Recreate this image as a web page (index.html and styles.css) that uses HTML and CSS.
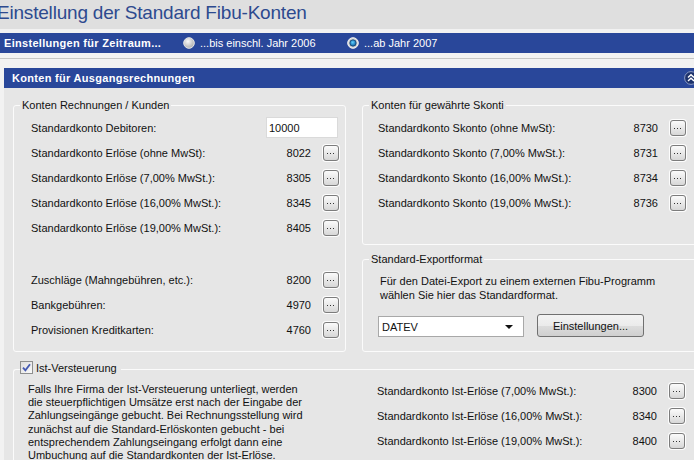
FILE: index.html
```html
<!DOCTYPE html>
<html lang="de">
<head>
  <meta charset="UTF-8">
  <meta name="viewport" content="width=device-width, initial-scale=1.0">
  <title>Einstellung der Standard Fibu-Konten</title>
  <link rel="stylesheet" href="styles.css">
</head>
<body>
  <h1 class="page-title">Einstellung der Standard Fibu-Konten</h1>

  <div class="period-bar">
    <span class="period-label">Einstellungen für Zeitraum...</span>
    <label class="period-option">
      <svg class="radio" width="12" height="12" viewBox="0 0 12 12">
        <defs>
          <radialGradient id="radio-off" cx="40%" cy="35%" r="70%">
            <stop offset="0" stop-color="#fbfbfb"/>
            <stop offset="1" stop-color="#a9a9a9"/>
          </radialGradient>
        </defs>
        <circle cx="6" cy="6" r="5.3" fill="url(#radio-off)" stroke="#e8e8e8" stroke-width="1"/>
      </svg>
      ...bis einschl. Jahr 2006
    </label>
    <label class="period-option">
      <svg class="radio" width="12" height="12" viewBox="0 0 12 12">
        <defs>
          <radialGradient id="radio-on" cx="45%" cy="40%" r="60%">
            <stop offset="0" stop-color="#5fd0ff"/>
            <stop offset="1" stop-color="#0b5fa0"/>
          </radialGradient>
        </defs>
        <circle cx="6" cy="6" r="5.3" fill="#d6d6d6" stroke="#f4f4f4" stroke-width="1"/>
        <circle cx="6" cy="6" r="3.2" fill="url(#radio-on)" stroke="#14406e" stroke-width="0.8"/>
      </svg>
      ...ab Jahr 2007
    </label>
  </div>

  <div class="divider"></div>

  <div class="section">
    <div class="section-head">
      <span>Konten für Ausgangsrechnungen</span>
      <svg class="collapse" width="14" height="14" viewBox="0 0 14 14">
        <circle cx="7" cy="7" r="6.4" fill="#1d326c" stroke="#8d9cc4" stroke-width="1"/>
        <polyline points="4,6.5 7,3.8 10,6.5" fill="none" stroke="#fff" stroke-width="1.4"/>
        <polyline points="4,10 7,7.3 10,10" fill="none" stroke="#fff" stroke-width="1.4"/>
      </svg>
    </div>

    <div class="section-body">
      <!-- Erlöskonten links -->
      <fieldset class="group group-invoices">
        <legend>Konten Rechnungen / Kunden</legend>
        <div class="rows">
          <div class="row">
            <span class="label">Standardkonto Debitoren:</span>
            <input class="account-input" type="text" value="10000">
          </div>
          <div class="row">
            <span class="label">Standardkonto Erlöse (ohne MwSt):</span>
            <span class="value">8022</span><button class="pick"></button>
          </div>
          <div class="row">
            <span class="label">Standardkonto Erlöse (7,00% MwSt.):</span>
            <span class="value">8305</span><button class="pick"></button>
          </div>
          <div class="row">
            <span class="label">Standardkonto Erlöse (16,00% MwSt.):</span>
            <span class="value">8345</span><button class="pick"></button>
          </div>
          <div class="row">
            <span class="label">Standardkonto Erlöse (19,00% MwSt.):</span>
            <span class="value">8405</span><button class="pick"></button>
          </div>
          <div class="row row-spaced">
            <span class="label">Zuschläge (Mahngebühren, etc.):</span>
            <span class="value">8200</span><button class="pick"></button>
          </div>
          <div class="row">
            <span class="label">Bankgebühren:</span>
            <span class="value">4970</span><button class="pick"></button>
          </div>
          <div class="row">
            <span class="label">Provisionen Kreditkarten:</span>
            <span class="value">4760</span><button class="pick"></button>
          </div>
        </div>
      </fieldset>

      <div class="side">
        <fieldset class="group group-discount">
          <legend>Konten für gewährte Skonti</legend>
          <div class="rows">
            <div class="row">
              <span class="label">Standardkonto Skonto (ohne MwSt):</span>
              <span class="value">8730</span><button class="pick"></button>
            </div>
            <div class="row">
              <span class="label">Standardkonto Skonto (7,00% MwSt.):</span>
              <span class="value">8731</span><button class="pick"></button>
            </div>
            <div class="row">
              <span class="label">Standardkonto Skonto (16,00% MwSt.):</span>
              <span class="value">8734</span><button class="pick"></button>
            </div>
            <div class="row">
              <span class="label">Standardkonto Skonto (19,00% MwSt.):</span>
              <span class="value">8736</span><button class="pick"></button>
            </div>
          </div>
        </fieldset>

        <fieldset class="group group-export">
          <legend>Standard-Exportformat</legend>
          <p class="export-text">Für den Datei-Export zu einem externen Fibu-Programm<br>wählen Sie hier das Standardformat.</p>
          <div class="export-controls">
            <div class="select"><span>DATEV</span><span class="arrow"></span></div>
            <button class="btn">Einstellungen...</button>
          </div>
        </fieldset>
      </div>

      <fieldset class="group group-cash">
        <legend>
          <svg class="checkbox" width="13" height="13" viewBox="0 0 13 13">
            <defs>
              <linearGradient id="check-bg" x1="0" y1="0" x2="1" y2="1">
                <stop offset="0" stop-color="#dcdcdc"/>
                <stop offset="1" stop-color="#fbfbfb"/>
              </linearGradient>
            </defs>
            <rect x="0.5" y="0.5" width="12" height="12" fill="url(#check-bg)" stroke="#8e8f8f"/>
            <path d="M3 6.6 L5.4 9.4 L10 3.2" fill="none" stroke="#4459b2" stroke-width="1.8"/>
          </svg>
          Ist-Versteuerung
        </legend>
        <div class="cash-grid">
          <p class="cash-text">Falls Ihre Firma der Ist-Versteuerung unterliegt, werden<br>die steuerpflichtigen Umsätze erst nach der Eingabe der<br>Zahlungseingänge gebucht. Bei Rechnungsstellung wird<br>zunächst auf die Standard-Erlöskonten gebucht - bei<br>entsprechendem Zahlungseingang erfolgt dann eine<br>Umbuchung auf die Standardkonten der Ist-Erlöse.</p>
          <div class="rows cash-rows">
            <div class="row">
              <span class="label">Standardkonto Ist-Erlöse (7,00% MwSt.):</span>
              <span class="value">8300</span><button class="pick"></button>
            </div>
            <div class="row">
              <span class="label">Standardkonto Ist-Erlöse (16,00% MwSt.):</span>
              <span class="value">8340</span><button class="pick"></button>
            </div>
            <div class="row">
              <span class="label">Standardkonto Ist-Erlöse (19,00% MwSt.):</span>
              <span class="value">8400</span><button class="pick"></button>
            </div>
          </div>
        </div>
      </fieldset>
    </div>
  </div>
</body>
</html>
```

FILE: styles.css
```css
html, body {
  overflow: hidden;
}

body {
  margin: 0;
  width: 694px;
  height: 460px;
  font-family: 'Liberation Sans', Arial, sans-serif;
  font-size: 11px;
  color: #111;
  background: #f2f2f2;
}

.page-title {
  margin: 0;
  height: 29px;
  box-sizing: border-box;
  padding-bottom: 4px;
  line-height: 25px;
  font-size: 19px;
  font-weight: normal;
  letter-spacing: -0.2px;
  text-indent: -3px;
  color: #2d4a8f;
  background: #dfdfdf;
}

.period-bar {
  display: flex;
  align-items: center;
  margin-top: 4px;
  height: 20px;
  background: #29479a;
  color: #fff;
}

.period-label {
  width: 179px;
  padding-left: 4px;
  font-weight: bold;
  letter-spacing: 0.3px;
}

.period-option {
  display: flex;
  align-items: center;
  gap: 5px;
  width: 164px;
}

.divider {
  margin: 5px 0 9px;
  border-top: 1px solid #c6c6c6;
}

.section {
  margin-left: 4px;
}

.section-head {
  display: flex;
  align-items: center;
  justify-content: space-between;
  height: 20px;
  padding-left: 8px;
  background: #29479a;
  color: #fff;
  font-weight: bold;
  letter-spacing: 0.3px;
  overflow: hidden;
}

.collapse {
  margin-right: -4px;
}

.section-body {
  display: grid;
  grid-template-columns: 333px 345px;
  column-gap: 16px;
  row-gap: 7px;
  align-items: stretch;
  height: 372px;
  padding: 11px 0 0 9px;
  background: #e6e6e6;
  overflow: hidden;
}

/* group boxes */
.group {
  margin: 0;
  padding: 0;
  min-width: 0;
  border: 1px solid #fbfbfb;
  border-radius: 3px;
}

.group legend {
  margin-left: 6px;
  padding: 0 2px;
  line-height: 13px;
}

.side {
  display: flex;
  flex-direction: column;
  gap: 8px;
}

.rows {
  padding: 3px 0 0;
}

.group-invoices .rows {
  padding-left: 17px;
}

.group-discount {
  padding-bottom: 29px;
}

.group-discount .rows,
.cash-rows {
  padding-left: 15px;
}

.row {
  display: flex;
  align-items: center;
  width: 308px;
  height: 25px;
}

.row-spaced {
  margin-top: 27px;
}

.label {
  flex: 1;
  white-space: nowrap;
}

.value {
  text-align: right;
}

.pick {
  position: relative;
  width: 16px;
  height: 16px;
  margin-left: 12px;
  padding: 0;
  box-sizing: border-box;
  border: 1px solid #7c7c7c;
  border-radius: 3px;
  background: linear-gradient(#fbfbfb, #e9e9e9 50%, #d7d7d7);
  box-shadow: 0 0 0 1px #fdfdfd;
}

/* three dots in the middle of the button */
.pick::after {
  content: '';
  position: absolute;
  left: 6px;
  top: 7px;
  width: 1px;
  height: 1px;
  background: #333;
  box-shadow: -3px 0 #333, 3px 0 #333;
}

.account-input {
  width: 72px;
  height: 21px;
  box-sizing: border-box;
  margin-right: 1px;
  padding: 0 2px;
  border: 1px solid #dadada;
  background: #fff;
  font: inherit;
  color: #111;
  outline: none;
}

.group-export {
  flex: 1;
  padding: 0 0 0 17px;
}

.group-export legend {
  margin-left: -11px;
}

.export-text {
  margin: 8px 0 0;
  line-height: 14px;
  white-space: nowrap;
}

.export-controls {
  display: flex;
  align-items: flex-end;
  margin-top: 12px;
  margin-left: -2px;
}

.select {
  display: flex;
  align-items: center;
  justify-content: space-between;
  width: 146px;
  height: 21px;
  box-sizing: border-box;
  padding: 0 10px 0 3px;
  border: 1px solid #a8a8a8;
  background: #fff;
}

.arrow {
  width: 0;
  height: 0;
  border-left: 4px solid transparent;
  border-right: 4px solid transparent;
  border-top: 4px solid #111;
}

.btn {
  width: 107px;
  height: 23px;
  margin-left: 13px;
  padding: 0;
  border: 1px solid #707070;
  border-radius: 3px;
  background: linear-gradient(#f3f3f3, #ebebeb 50%, #dddddd 51%, #cfcfcf);
  font: inherit;
  color: #111;
}

.group-cash {
  grid-column: 1 / -1;
  border-right: none;
  border-bottom: none;
  border-radius: 3px 0 0 0;
}

.group-cash legend {
  display: flex;
  align-items: center;
  gap: 3px;
  height: 18px;
  padding: 0 4px 4px 0;
  line-height: 14px;
}

.cash-grid {
  display: grid;
  grid-template-columns: 348px 1fr;
}

.cash-text {
  margin: 2px 0 0;
  padding-left: 14px;
  line-height: 13.2px;
  white-space: nowrap;
}

.cash-rows {
  margin-top: -2px;
  padding-top: 0;
}
```
